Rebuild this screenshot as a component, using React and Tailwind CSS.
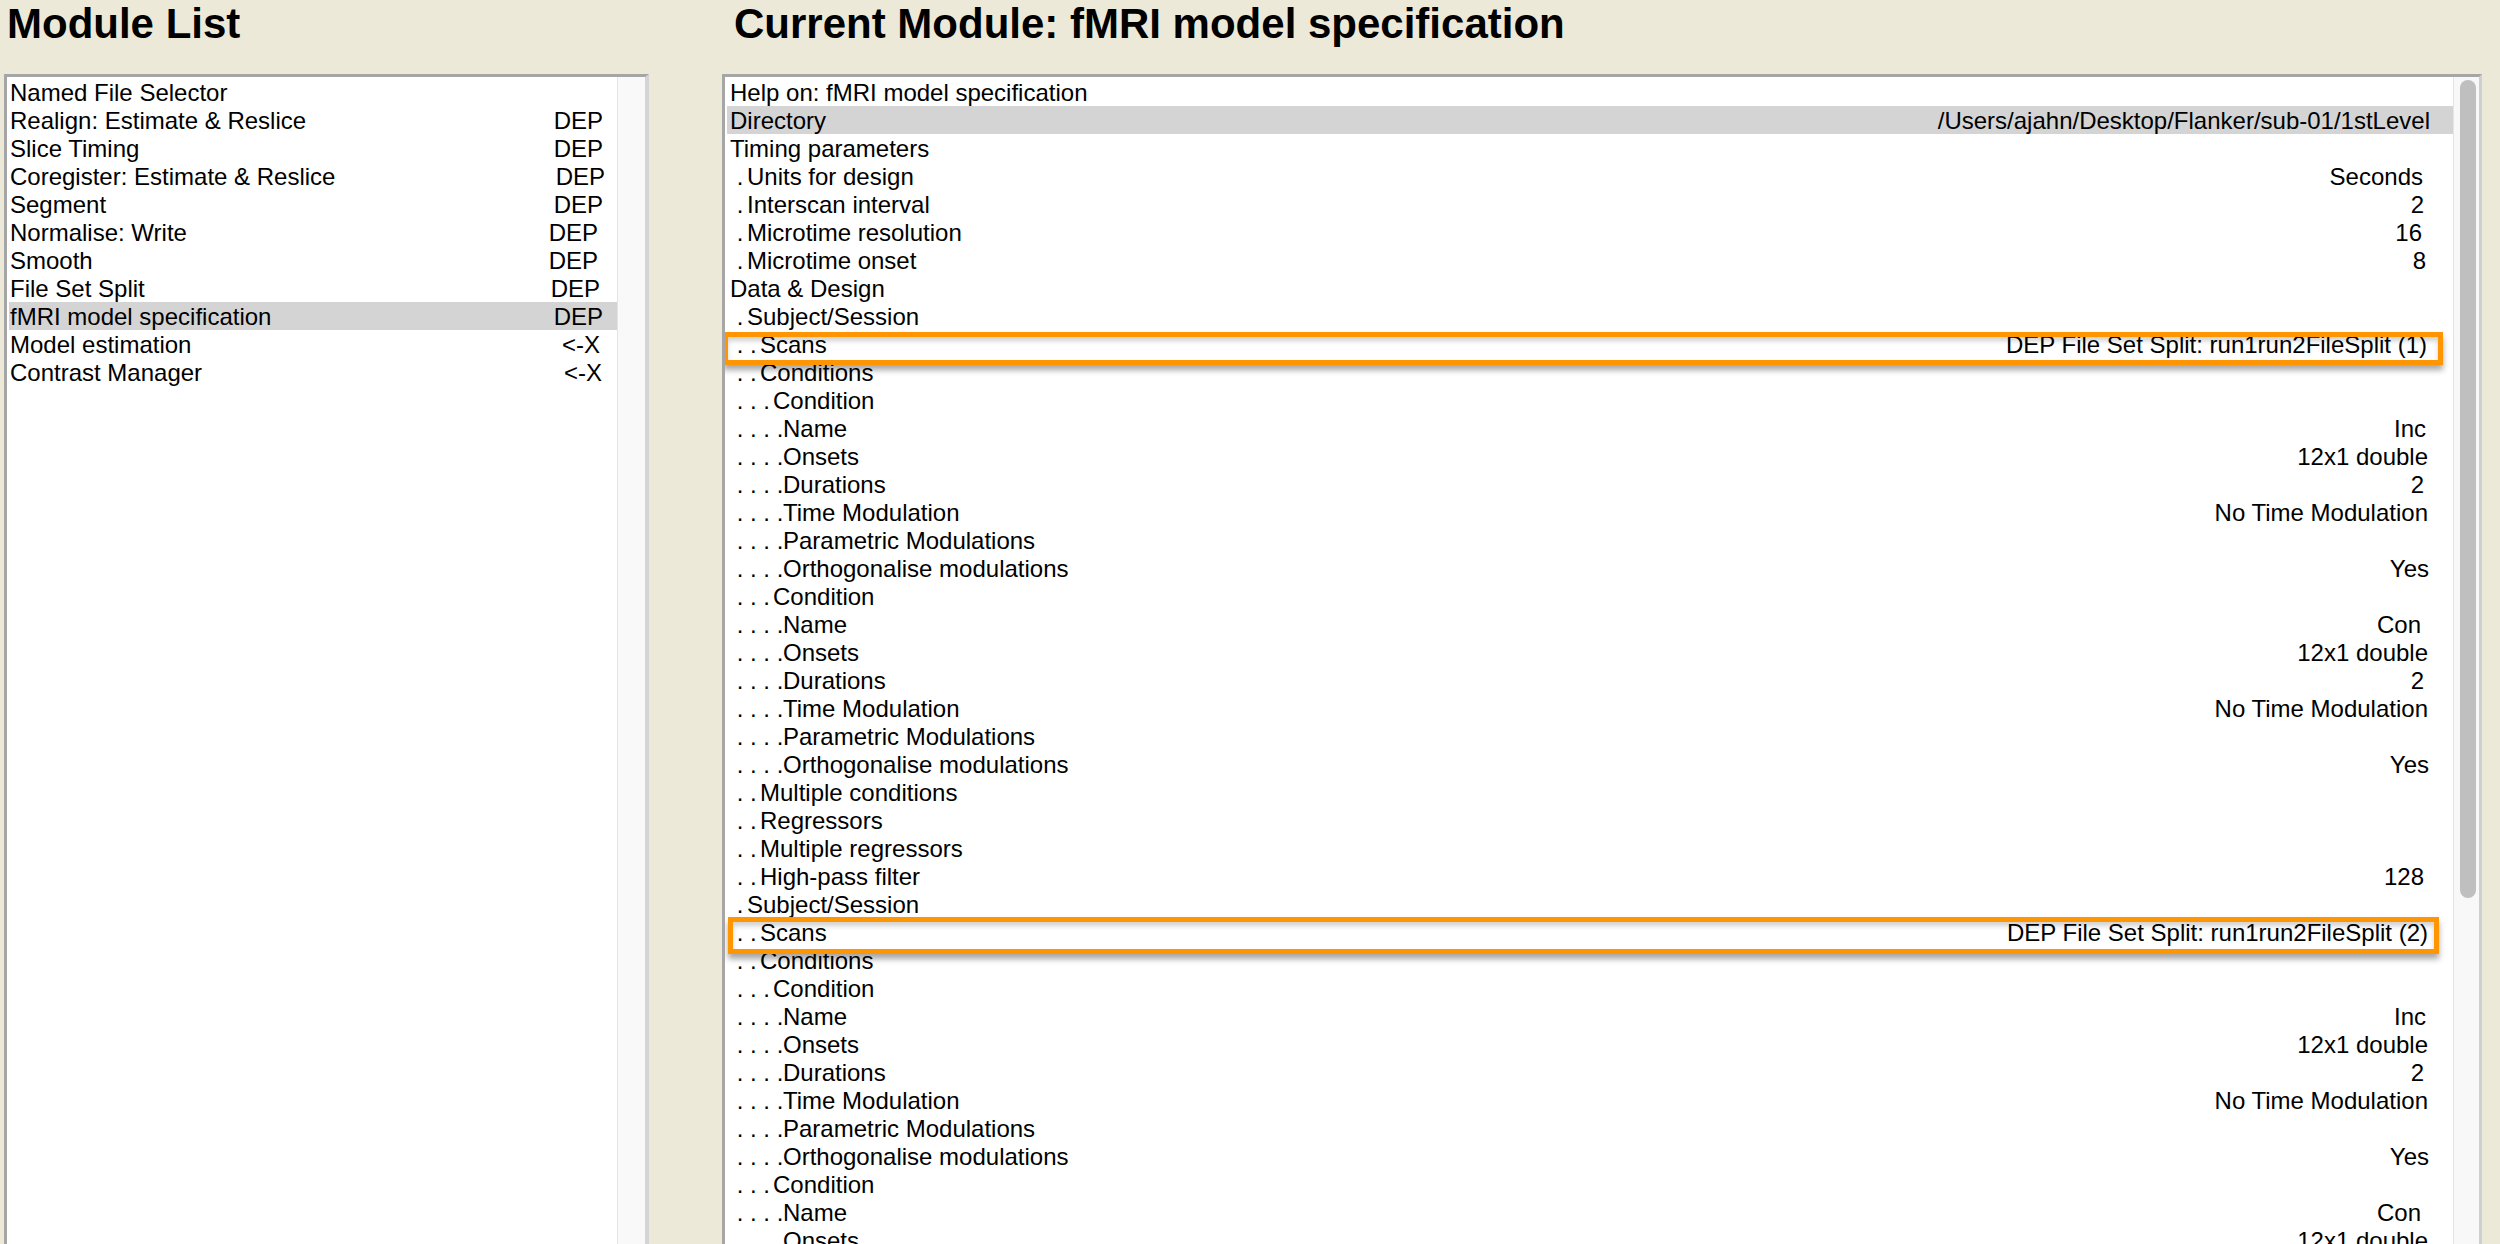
import React from 'react';

// Module list on the left (name, status, right padding to mimic the uneven column)
const modules = [
  { name: 'Named File Selector', tag: '', pr: 'pr-[14px]' },
  { name: 'Realign: Estimate & Reslice', tag: 'DEP', pr: 'pr-[14px]' },
  { name: 'Slice Timing', tag: 'DEP', pr: 'pr-[14px]' },
  { name: 'Coregister: Estimate & Reslice', tag: 'DEP', pr: 'pr-[12px]' },
  { name: 'Segment', tag: 'DEP', pr: 'pr-[14px]' },
  { name: 'Normalise: Write', tag: 'DEP', pr: 'pr-[19px]' },
  { name: 'Smooth', tag: 'DEP', pr: 'pr-[19px]' },
  { name: 'File Set Split', tag: 'DEP', pr: 'pr-[17px]' },
  { name: 'fMRI model specification', tag: 'DEP', pr: 'pr-[14px]', selected: true },
  { name: 'Model estimation', tag: '<-X', pr: 'pr-[17px]' },
  { name: 'Contrast Manager', tag: '<-X', pr: 'pr-[15px]' },
];

// tree depth → dotted prefix and the width it takes
const dots = ['', ' .', ' . .', ' . . .', ' . . . .'];
const indent = ['', 'w-[17px]', 'w-[30px]', 'w-[43px]', 'w-[53px]'];

const condition = (name) => [
  { lv: 3, label: 'Condition' },
  { lv: 4, label: 'Name', value: name, pr: name === 'Con' ? 'pr-[32px]' : 'pr-[27px]' },
  { lv: 4, label: 'Onsets', value: '12x1 double', pr: 'pr-[25px]' },
  { lv: 4, label: 'Durations', value: '2', pr: 'pr-[29px]' },
  { lv: 4, label: 'Time Modulation', value: 'No Time Modulation', pr: 'pr-[25px]' },
  { lv: 4, label: 'Parametric Modulations' },
  { lv: 4, label: 'Orthogonalise modulations', value: 'Yes', pr: 'pr-[24px]' },
];

const session = (n, box) => [
  { lv: 1, label: 'Subject/Session' },
  { lv: 2, label: 'Scans', value: `DEP File Set Split: run1run2FileSplit (${n})`, pr: n === 1 ? 'pr-[26px]' : 'pr-[25px]', box },
  { lv: 2, label: 'Conditions' },
  ...condition('Inc'),
  ...condition('Con'),
  { lv: 2, label: 'Multiple conditions' },
  { lv: 2, label: 'Regressors' },
  { lv: 2, label: 'Multiple regressors' },
  { lv: 2, label: 'High-pass filter', value: '128', pr: 'pr-[29px]' },
];

const specRows = [
  { lv: 0, label: 'Help on: fMRI model specification' },
  { lv: 0, label: 'Directory', value: '/Users/ajahn/Desktop/Flanker/sub-01/1stLevel', pr: 'pr-[23px]', selected: true },
  { lv: 0, label: 'Timing parameters' },
  { lv: 1, label: 'Units for design', value: 'Seconds', pr: 'pr-[30px]' },
  { lv: 1, label: 'Interscan interval', value: '2', pr: 'pr-[29px]' },
  { lv: 1, label: 'Microtime resolution', value: '16', pr: 'pr-[31px]' },
  { lv: 1, label: 'Microtime onset', value: '8', pr: 'pr-[27px]' },
  { lv: 0, label: 'Data & Design' },
  ...session(1, 'left-[-4px] right-[10px] top-[2px] h-[33px]'),
  ...session(2, 'left-[1px] right-[14px] top-[-1px] h-[37px]'),
];

function Highlight({ className }) {
  // orange annotation frame drawn over a row
  return (
    <div
      className={`absolute z-10 border-[5px] border-[#ff9500] shadow-[0_5px_6px_rgba(0,0,0,0.35),inset_0_4px_5px_rgba(0,0,0,0.18)] ${className}`}
    />
  );
}

export default function App() {
  return (
    <div className="h-screen w-full overflow-hidden bg-[#ece9d9] flex font-['Liberation_Sans',Arial,sans-serif] text-black">
      {/* Module List */}
      <div className="ml-[4px] w-[645px] flex flex-col">
        <h1 className="h-[74px] pl-[3px] text-[42px] leading-[48px] font-bold">Module List</h1>
        <div className="flex-1 min-h-0 flex bg-white border-t-[3px] border-l-[3px] border-r-[4px] border-t-[#a6a6a6] border-l-[#a6a6a6] border-r-[#d4d4d4]">
          <div className="flex-1 pl-[2px] pt-[1px]">
            {modules.map((m) => (
              <div
                key={m.name}
                className={`flex justify-between whitespace-pre h-[28px] leading-[29px] text-[24px] pl-[1px] ${m.pr} ${m.selected ? 'bg-[#d4d4d4]' : ''}`}
              >
                <span>{m.name}</span>
                <span>{m.tag}</span>
              </div>
            ))}
          </div>
          <div className="w-[28px] border-l border-[#e4e4e4] bg-[#f9f9f9]" />
        </div>
      </div>

      {/* Current Module */}
      <div className="ml-[73px] w-[1760px] flex flex-col">
        <h1 className="h-[74px] pl-[12px] text-[42px] leading-[48px] font-bold">Current Module: fMRI model specification</h1>
        <div className="flex-1 min-h-0 flex bg-white border-t-[3px] border-l-[3px] border-r-[3px] border-t-[#a6a6a6] border-l-[#a6a6a6] border-r-[#cfcfcf]">
          <div className="flex-1 pl-[2px] pt-[1px] overflow-hidden">
            {specRows.map((r, i) => (
              <div
                key={i}
                className={`${r.box ? 'relative' : ''} flex justify-between whitespace-pre h-[28px] leading-[29px] text-[24px] pl-[3px] ${r.pr || ''} ${r.selected ? 'bg-[#d4d4d4]' : ''}`}
              >
                <span className="flex">
                  {r.lv > 0 && <span className={`inline-block shrink-0 ${indent[r.lv]}`}>{dots[r.lv]}</span>}
                  <span>{r.label}</span>
                </span>
                <span>{r.value || ''}</span>
                {r.box && <Highlight className={r.box} />}
              </div>
            ))}
          </div>
          <div className="w-[26px] border-l border-[#e4e4e4] bg-[#f8f8f8]">
            <div className="mt-[3px] ml-[6px] w-[16px] h-[818px] rounded-full bg-[#bfbfbf]" />
          </div>
        </div>
      </div>
    </div>
  );
}
